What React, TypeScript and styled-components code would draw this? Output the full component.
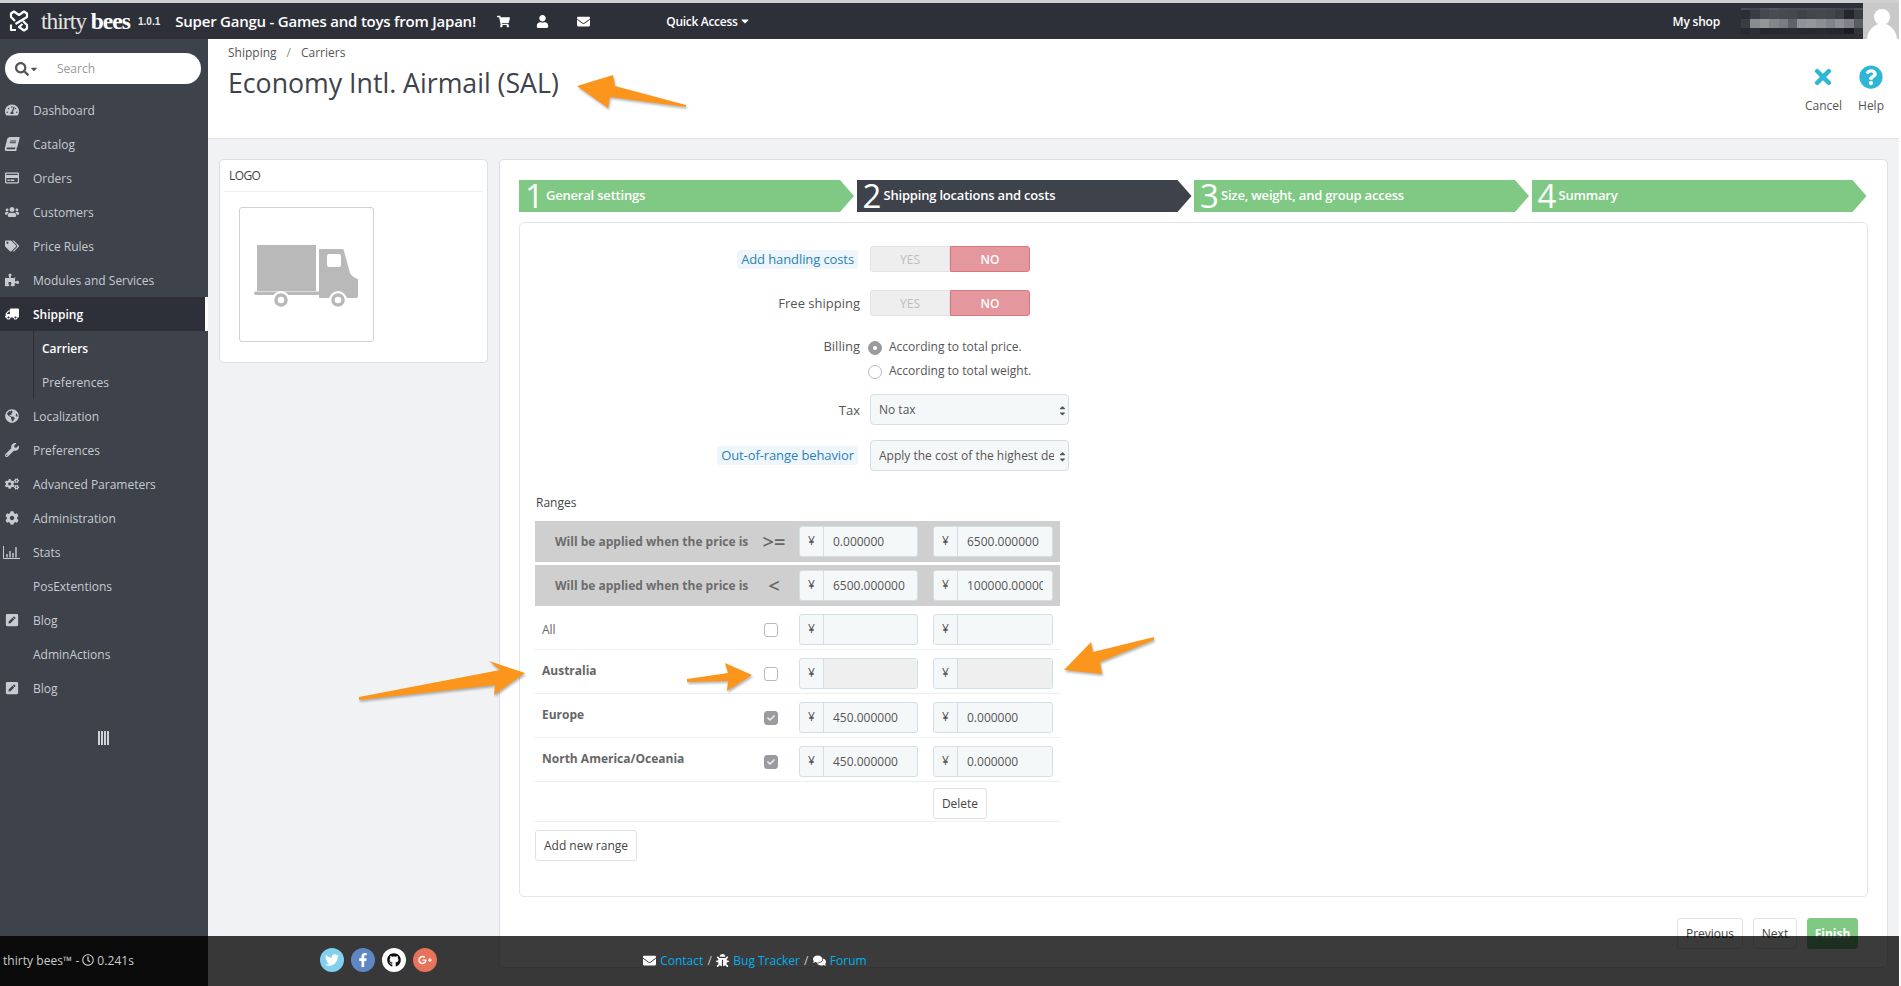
import { ReactNode } from 'react'
import styled, { createGlobalStyle } from 'styled-components'
import {
  FaBook,
  FaBug,
  FaCaretDown,
  FaCaretUp,
  FaCheck,
  FaCog,
  FaCogs,
  FaComments,
  FaEnvelope,
  FaFacebookF,
  FaGithub,
  FaGlobeAmericas,
  FaGooglePlusG,
  FaPenSquare,
  FaPuzzlePiece,
  FaQuestionCircle,
  FaRegClock,
  FaRegCreditCard,
  FaSearch,
  FaShoppingCart,
  FaTachometerAlt,
  FaTags,
  FaTimes,
  FaTruck,
  FaTwitter,
  FaUser,
  FaUsers,
  FaWrench,
} from 'react-icons/fa'

const GlobalStyle = createGlobalStyle`
  html, body {
    margin: 0;
    background: #fff;
    font-family: "Open Sans", "Liberation Sans", sans-serif;
    font-size: 12px;
    color: #555;
  }
  * { box-sizing: border-box; }
`

const Page = styled.div`
  position: relative;
  width: 1899px;
  height: 986px;
  overflow: hidden;
`

const TopBar = styled.header`
  height: 39px;
  border-top: 3px solid #cfcfd1;
  background: #2e3039;
  display: flex;
  align-items: center;
  color: #fff;
`

const LogoMark = styled.svg`
  width: 20px;
  height: 22px;
  margin-left: 9px;
`

const LogoText = styled.span`
  margin-left: 12px;
  width: 92px;
  font-family: "Liberation Serif", serif;
  font-size: 23.5px;
  letter-spacing: -1px;
  white-space: nowrap;
  color: #e4e4e4;
  b { color: #fff; font-weight: 700; }
`

const Version = styled.span`
  margin-left: 5px;
  font-family: "Liberation Sans", sans-serif;
  font-size: 10px;
  font-weight: 700;
  color: #e8e8e8;
`

const ShopName = styled.span`
  margin-left: 15px;
  font-size: 15px;
  font-weight: 600;
  letter-spacing: -0.22px;
  width: 302px;
  white-space: nowrap;
`

const TopIcon = styled.span<{ $gap: number }>`
  display: flex;
  margin-left: ${p => p.$gap}px;
  font-size: 13px;
`

const QuickAccess = styled.span`
  margin-left: 76px;
  display: flex;
  align-items: center;
  gap: 2px;
  font-weight: 600;
  letter-spacing: -0.3px;
`

const MyShop = styled.span`
  margin-left: auto;
  font-weight: 600;
  letter-spacing: -0.2px;
`

const Blurred = styled.svg`
  display: block;
  width: 122px;
  height: 26px;
  margin-left: 21px;
`

const Avatar = styled.svg`
  display: block;
  width: 36px;
  height: 36px;
`

const Body = styled.div`
  display: flex;
  height: 947px;
`

const Sidebar = styled.nav`
  width: 208px;
  flex: none;
  background: #3e424b;
  padding-top: 14px;
`

const SearchBox = styled.div`
  width: 196px;
  height: 31px;
  margin: 0 0 9px 5px;
  border-radius: 16px;
  background: #fff;
  display: flex;
  align-items: center;
  padding-left: 10px;
  color: #555;
  font-size: 12px;
  > svg:first-child { font-size: 14px; }
  span { color: #999; margin-left: 18px; }
`

const MenuRow = styled.div<{ $active?: boolean }>`
  height: 34px;
  display: flex;
  align-items: center;
  padding-left: 33px;
  position: relative;
  color: ${p => (p.$active ? '#fff' : '#c7cbd1')};
  font-weight: ${p => (p.$active ? 600 : 400)};
  background: ${p => (p.$active ? '#2e3039' : 'transparent')};
  border-right: ${p => (p.$active ? '3px solid #fff' : 'none')};
`

const MenuIcon = styled.span`
  position: absolute;
  left: 3px;
  width: 17px;
  display: flex;
  justify-content: center;
  color: #c7cbd1;
  font-size: 14px;
`

const ShippingIcon = styled(MenuIcon)`
  color: #fff;
  svg { transform: scaleX(-1); }
`

const SlantedBook = styled(FaBook)`
  transform: skewX(-14deg);
`

const SubMenu = styled.div`
  margin-left: 33px;
  border-left: 1px solid #2e3039;
`

const SubRow = styled.div<{ $active?: boolean }>`
  height: 34px;
  display: flex;
  align-items: center;
  padding-left: 8px;
  color: ${p => (p.$active ? '#fff' : '#c7cbd1')};
  font-weight: ${p => (p.$active ? 600 : 400)};
`

const Collapse = styled.div`
  display: flex;
  justify-content: center;
  gap: 1px;
  margin: 26px 0 0 -2px;
  i { display: block; width: 2px; height: 14px; background: #cfd2d6; }
`

const Content = styled.main`
  flex: 1;
  min-width: 0;
  background: #f1f2f4;
`

const PageHead = styled.div`
  height: 100px;
  background: #fff;
  border-bottom: 1px solid #dfe1e4;
  padding: 6px 15px 0 20px;
  display: flex;
  justify-content: space-between;
`

const Breadcrumb = styled.div`
  height: 16px;
  line-height: 16px;
  color: #555;
  display: flex;
  gap: 10px;
  em { font-style: normal; color: #7a9a72; }
`

const PageTitle = styled.h1`
  margin: 3px 0 0;
  font-size: 26.7px;
  font-weight: 400;
  line-height: 38px;
  color: #3e424b;
`

const Toolbar = styled.div`
  display: flex;
  gap: 16px;
  padding-top: 20px;
`

const ToolButton = styled.div`
  display: flex;
  flex-direction: column;
  align-items: center;
  gap: 9px;
  color: #555;
  line-height: 16px;
  svg { color: #2eb6d6; font-size: 24px; }
`

const Columns = styled.div`
  display: flex;
  align-items: flex-start;
  gap: 11px;
  padding: 20px 11px 0;
`

const LogoPanel = styled.section`
  width: 269px;
  height: 204px;
  flex: none;
  background: #fff;
  border: 1px solid #dcdfe2;
  border-radius: 5px;
  padding: 0 4px;
`

const LogoHead = styled.div`
  height: 32px;
  line-height: 31px;
  padding-left: 5px;
  border-bottom: 1px solid #eceef0;
  color: #444;
  letter-spacing: -0.6px;
  font-size: 12px;
`

const LogoFrame = styled.div`
  width: 135px;
  height: 135px;
  margin: 15px 0 0 15px;
  border: 1px solid #cfd1d3;
  border-radius: 3px;
  svg { display: block; width: 133px; height: 133px; }
`

const MainPanel = styled.section`
  flex: 1;
  height: 809px;
  background: #fff;
  border: 1px solid #dcdfe2;
  border-radius: 5px;
  padding: 20px 19px 0;
`

const Steps = styled.div`
  display: flex;
  gap: 2.5px;
  margin-bottom: 10px;
`

const Step = styled.div<{ $current?: boolean }>`
  width: 335px;
  height: 32px;
  flex: none;
  display: flex;
  align-items: center;
  color: #fff;
  background: ${p => (p.$current ? '#3e424b' : '#7fc984')};
  clip-path: polygon(0 0, 321px 0, 100% 50%, 321px 100%, 0 100%);
  padding-left: 6px;
`

const StepNumber = styled.span`
  font-size: 33px;
  line-height: 32px;
  font-weight: 400;
  width: 21px;
  flex: none;
`

const StepLabel = styled.span`
  font-size: 13px;
  line-height: 29px;
  height: 31px;
  font-weight: 600;
  letter-spacing: -0.2px;
`

const FormPanel = styled.div`
  height: 675px;
  border: 1px solid #e4e5e7;
  border-radius: 5px;
  padding-top: 23px;
`

const FormRow = styled.div<{ $after: number }>`
  display: flex;
  align-items: center;
  gap: 10px;
  margin-bottom: ${p => p.$after}px;
`

const LabelCell = styled.div`
  width: 340px;
  display: flex;
  justify-content: flex-end;
  font-size: 13px;
  color: #555;
`

const HintLabel = styled.span`
  background: #eef6fb;
  color: #2a82b8;
  border-radius: 3px;
  padding: 0 4px;
  margin-right: 2px;
  line-height: 19px;
  letter-spacing: -0.1px;
`

const TopLabel = styled.span`
  margin-bottom: 25px;
`

const Toggle = styled.div`
  display: flex;
  width: 160px;
  height: 26px;
`

const ToggleOff = styled.span`
  flex: 1;
  display: flex;
  align-items: center;
  justify-content: center;
  background: #eeeeee;
  border: 1px solid #e2e2e2;
  border-radius: 3px 0 0 3px;
  color: #bdbdbd;
`

const ToggleOn = styled.span`
  flex: 1;
  display: flex;
  align-items: center;
  justify-content: center;
  background: #e4989e;
  border: 1px solid #d9777f;
  border-radius: 0 3px 3px 0;
  color: #fff;
  font-weight: 600;
`

const RadioStack = styled.div`
  display: flex;
  flex-direction: column;
  gap: 6px;
`

const RadioLine = styled.div`
  height: 18px;
  display: flex;
  align-items: center;
  gap: 7px;
  margin-left: -2px;
  color: #555;
`

const RadioDot = styled.span<{ $on?: boolean }>`
  width: 14px;
  height: 14px;
  border-radius: 50%;
  margin-top: 2px;
  border: 1px solid ${p => (p.$on ? '#9a9a9f' : '#b9b9bd')};
  background: ${p => (p.$on ? '#9a9a9f' : '#fff')};
  display: flex;
  align-items: center;
  justify-content: center;
  &::after {
    content: '';
    width: 4px;
    height: 4px;
    border-radius: 50%;
    background: ${p => (p.$on ? '#fff' : 'transparent')};
  }
`

const SelectWrap = styled.div`
  position: relative;
  width: 199px;
`

const Select = styled.select`
  display: block;
  width: 100%;
  height: 31px;
  appearance: none;
  background: #f5f8f9;
  border: 1px solid #d3e0e3;
  border-radius: 4px;
  color: #555;
  font: 12px "Open Sans", sans-serif;
  padding: 0 14px 0 8px;
`

const SelectArrows = styled.span`
  position: absolute;
  right: 2px;
  top: 9px;
  display: flex;
  flex-direction: column;
  font-size: 9px;
  line-height: 0;
  color: #555;
  svg:last-child { margin-top: -3px; }
`

const RangesTitle = styled.div`
  margin: 24px 0 10px 16px;
  line-height: 16px;
  color: #444;
`

const RangeTable = styled.div`
  width: 525px;
  margin-left: 15px;
`

const RangeRow = styled.div<{ $head?: boolean }>`
  display: grid;
  grid-template-columns: 210px 47px 134px 120px;
  align-items: center;
  padding: ${p => (p.$head ? '5px 7px' : '8px 7px 5px')};
  height: ${p => (p.$head ? '41px' : '44px')};
  background: ${p => (p.$head ? '#cfcfcf' : 'transparent')};
  margin-bottom: ${p => (p.$head ? '3px' : '0')};
  border-bottom: ${p => (p.$head ? 'none' : '1px solid #eceef0')};
  &:nth-child(2) { margin-bottom: 0; }
`

const HeadLabel = styled.span`
  padding-left: 13px;
  font-weight: 700;
  color: #6c6c6c;
  white-space: nowrap;
`

const Operator = styled.span`
  width: 44px;
  text-align: center;
  font-size: 20px;
  line-height: 20px;
  font-weight: 600;
  color: #666;
`

const ZoneLabel = styled.span<{ $bold?: boolean }>`
  color: #666;
  font-weight: ${p => (p.$bold ? 700 : 400)};
  margin-bottom: ${p => (p.$bold ? '6px' : '0')};
`

const Check = styled.span<{ $on?: boolean }>`
  width: 14px;
  height: 14px;
  margin-left: 12px;
  border-radius: 3px;
  border: 1px solid ${p => (p.$on ? '#9a9a9f' : '#b9b9bd')};
  background: ${p => (p.$on ? '#9a9a9f' : '#fff')};
  display: flex;
  align-items: center;
  justify-content: center;
  font-size: 8px;
  color: #eee;
`

const InputGroup = styled.div<{ $w: number }>`
  width: ${p => p.$w}px;
  height: 31px;
  display: flex;
  border: 1px solid #d3e0e3;
  border-radius: 3px;
  background: #f5f8f9;
  overflow: hidden;
`

const Addon = styled.span`
  width: 24px;
  flex: none;
  display: flex;
  align-items: center;
  justify-content: center;
  border-right: 1px solid #d3e0e3;
  color: #555;
  font-size: 12px;
  padding-bottom: 3px;
`

const Amount = styled.input<{ $off?: boolean }>`
  flex: 1;
  min-width: 0;
  width: 100%;
  border: 0;
  outline: 0;
  padding: 0 9px;
  font: 12px "Open Sans", sans-serif;
  color: #555;
  background: ${p => (p.$off ? '#efefef' : 'transparent')};
`

const PlainButton = styled.button<{ $w: number }>`
  width: ${p => p.$w}px;
  height: 31px;
  padding: 0;
  background: #fff;
  border: 1px solid #e0e1e3;
  border-radius: 3px;
  color: #444;
  font: 12px "Open Sans", sans-serif;
`

const DeleteRow = styled.div`
  height: 40px;
  padding: 6px 0 0 398px;
  border-bottom: 1px solid #eceef0;
`

const AddRow = styled.div`
  margin: 8px 0 0 15px;
`

const WizardActions = styled.div`
  display: flex;
  justify-content: flex-end;
  gap: 10px;
  padding: 21px 10px 0 0;
`

const FinishButton = styled(PlainButton)`
  background: #7fc984;
  border-color: #7fc984;
  color: #fff;
  font-weight: 700;
`

const Footer = styled.footer`
  position: absolute;
  left: 0;
  bottom: 0;
  width: 100%;
  height: 50px;
  display: flex;
  z-index: 3;
  background: rgba(0, 0, 0, 0.77);
`

const FooterBrand = styled.div`
  width: 208px;
  flex: none;
  background: #0a0a0a;
  color: #ccc;
  display: flex;
  align-items: center;
  gap: 3px;
  padding: 0 0 2px 3px;
  white-space: nowrap;
  letter-spacing: 0.05px;
`

const Socials = styled.div`
  display: flex;
  align-items: center;
  gap: 7px;
  margin-left: 112px;
  padding-bottom: 2px;
`

const Social = styled.span<{ $bg: string; $fg?: string }>`
  width: 24px;
  height: 24px;
  border-radius: 50%;
  display: flex;
  align-items: center;
  justify-content: center;
  font-size: 14px;
  background: ${p => p.$bg};
  color: ${p => p.$fg ?? '#fff'};
`

const FooterLinks = styled.div`
  display: flex;
  align-items: center;
  gap: 4.2px;
  margin-left: 206px;
  padding-bottom: 2px;
  color: #ccc;
  a { color: #00aff0; }
  svg { color: #fff; font-size: 13px; }
`

const Arrows = styled.svg`
  position: absolute;
  left: 0;
  top: 0;
  width: 1901px;
  height: 986px;
  z-index: 2;
  pointer-events: none;
  polygon {
    fill: #fb951c;
    filter: drop-shadow(1px 2px 1px rgba(0, 0, 0, 0.28));
  }
`

function ThirtyBeesMark() {
  return (
    <LogoMark viewBox="0 0 20 22" fill="none" stroke="#fff" strokeWidth="2.2" strokeLinejoin="round">
      <path d="M6 11 L2 7 V3.5 L5 1.5 L10 5 L15 1.5 L18 3.5 V7 L6.5 14" />
      <path d="M14 11 L18 15 V18.5 L15 20.5 L10 17 L13.5 14 M2 14.5 V20 H7" />
    </LogoMark>
  )
}

// pixelated shop address in the top bar
const blurRows: [number, number, string[]][] = [
  [0, 2, ['#4a4d56', '#44474f', '#4c4f58', '#55585f', '#4b4e57', '#4a4d56', '#4c4f58', '#4b4e57', '#4a4d56', '#484b54', '#454851', '#404249', '#4f5158']],
  [2, 9, ['#2c2e36', '#3a3d45', '#454850', '#4a4c54', '#46494f', '#45484f', '#3f4249', '#43464d', '#46484f', '#44464e', '#3d3f47', '#24262c', '#3a3c44']],
  [11, 9, ['#3a3c44', '#8b8c90', '#95969a', '#85868b', '#7b7c81', '#5f626a', '#92939a', '#96979b', '#8e8f94', '#82838a', '#8f9198', '#808186', '#5a5c62']],
  [20, 6, ['#282a31', '#2d2f36', '#25272d', '#272930', '#282a30', '#2a2c33', '#282a30', '#272930', '#292b31', '#26282e', '#25272c', '#1c1d22', '#33353c']],
]

function BlurredShop() {
  return (
    <Blurred viewBox="0 0 122 26" shapeRendering="crispEdges">
      {blurRows.map(([y, h, cells]) =>
        cells.map((fill, i) => <rect key={`${y}-${i}`} x={i * 9.4} y={y} width={9.4} height={h} fill={fill} />),
      )}
    </Blurred>
  )
}

function AvatarPicture() {
  return (
    <Avatar viewBox="0 0 36 36">
      <rect width="36" height="36" fill="#c9c9c9" />
      <circle cx="19" cy="14" r="8" fill="#fff" />
      <path d="M4 36 C5 26 11 23 15 21 H23 C27 23 33 26 34 36 Z" fill="#fff" />
    </Avatar>
  )
}

function TruckPicture() {
  return (
    <svg viewBox="1 1 133 133">
      <rect x="18" y="38" width="59" height="46" fill="#b9b9b9" />
      <path d="M80 42 H103 Q105 42 105 44 L111 66 Q113 70 119 72 V89 Q119 91 117 91 H80 V88 H17 Q15 88 15 86 Q15 84.5 17 84.5 H80 Z" fill="#b9b9b9" />
      <rect x="88" y="47" width="14" height="13" rx="2" fill="#fff" />
      <circle cx="42" cy="93" r="9" fill="#fff" />
      <circle cx="42" cy="93" r="5" fill="#fff" stroke="#b9b9b9" strokeWidth="3.5" />
      <circle cx="99" cy="93" r="9" fill="#fff" />
      <circle cx="99" cy="93" r="5" fill="#fff" stroke="#b9b9b9" strokeWidth="3.5" />
    </svg>
  )
}

function StatsIcon() {
  return (
    <svg width="17" height="13" viewBox="0 0 17 13" fill="none" stroke="#c7cbd1">
      <path d="M.5 0 V12.5 H17" />
      <path d="M4 11.5 V8 M7 11.5 V5 M10 11.5 V7 M13 11.5 V1" strokeWidth="1.4" />
    </svg>
  )
}

type MenuEntry = { label: string; icon?: ReactNode }

const upperMenu: MenuEntry[] = [
  { label: 'Dashboard', icon: <FaTachometerAlt /> },
  { label: 'Catalog', icon: <SlantedBook /> },
  { label: 'Orders', icon: <FaRegCreditCard /> },
  { label: 'Customers', icon: <FaUsers /> },
  { label: 'Price Rules', icon: <FaTags /> },
  { label: 'Modules and Services', icon: <FaPuzzlePiece /> },
]

const lowerMenu: MenuEntry[] = [
  { label: 'Localization', icon: <FaGlobeAmericas /> },
  { label: 'Preferences', icon: <FaWrench /> },
  { label: 'Advanced Parameters', icon: <FaCogs /> },
  { label: 'Administration', icon: <FaCog /> },
  { label: 'Stats', icon: <StatsIcon /> },
  { label: 'PosExtentions' },
  { label: 'Blog', icon: <FaPenSquare /> },
  { label: 'AdminActions' },
  { label: 'Blog', icon: <FaPenSquare /> },
]

const wizardSteps = [
  'General settings',
  'Shipping locations and costs',
  'Size, weight, and group access',
  'Summary',
]

const zones = [
  { name: 'All', checked: false, off: false, bold: false, from: '', to: '' },
  { name: 'Australia', checked: false, off: true, bold: true, from: '', to: '' },
  { name: 'Europe', checked: true, off: false, bold: true, from: '450.000000', to: '0.000000' },
  { name: 'North America/Oceania', checked: true, off: false, bold: true, from: '450.000000', to: '0.000000' },
]

function MoneyInput({ w, value, off }: { w: number; value: string; off?: boolean }) {
  return (
    <InputGroup $w={w}>
      <Addon>¥</Addon>
      <Amount $off={off} value={value} readOnly />
    </InputGroup>
  )
}

function NoYesToggle() {
  return (
    <Toggle>
      <ToggleOff>YES</ToggleOff>
      <ToggleOn>NO</ToggleOn>
    </Toggle>
  )
}

function FormSelect({ value }: { value: string }) {
  return (
    <SelectWrap>
      <Select value={value} onChange={() => {}}>
        <option>{value}</option>
      </Select>
      <SelectArrows>
        <FaCaretUp />
        <FaCaretDown />
      </SelectArrows>
    </SelectWrap>
  )
}

export default function App() {
  return (
    <Page>
      <GlobalStyle />
      <TopBar>
        <ThirtyBeesMark />
        <LogoText>
          thirty <b>bees</b>
        </LogoText>
        <Version>1.0.1</Version>
        <ShopName>Super Gangu - Games and toys from Japan!</ShopName>
        <TopIcon $gap={20}><FaShoppingCart /></TopIcon>
        <TopIcon $gap={26}><FaUser /></TopIcon>
        <TopIcon $gap={28}><FaEnvelope /></TopIcon>
        <QuickAccess>Quick Access <FaCaretDown /></QuickAccess>
        <MyShop>My shop</MyShop>
        <BlurredShop />
        <AvatarPicture />
      </TopBar>
      <Body>
        <Sidebar>
          <SearchBox>
            <FaSearch />
            <FaCaretDown size={10} />
            <span>Search</span>
          </SearchBox>
          {upperMenu.map(item => (
            <MenuRow key={item.label}>
              <MenuIcon>{item.icon}</MenuIcon>
              {item.label}
            </MenuRow>
          ))}
          <MenuRow $active>
            <ShippingIcon><FaTruck /></ShippingIcon>
            Shipping
          </MenuRow>
          <SubMenu>
            <SubRow $active>Carriers</SubRow>
            <SubRow>Preferences</SubRow>
          </SubMenu>
          {lowerMenu.map((item, i) => (
            <MenuRow key={i}>
              <MenuIcon>{item.icon}</MenuIcon>
              {item.label}
            </MenuRow>
          ))}
          <Collapse><i /><i /><i /><i /></Collapse>
        </Sidebar>
        <Content>
          <PageHead>
            <div>
              <Breadcrumb>
                <span>Shipping</span>
                <em>/</em>
                <span>Carriers</span>
              </Breadcrumb>
              <PageTitle>Economy Intl. Airmail (SAL)</PageTitle>
            </div>
            <Toolbar>
              <ToolButton><FaTimes />Cancel</ToolButton>
              <ToolButton><FaQuestionCircle />Help</ToolButton>
            </Toolbar>
          </PageHead>
          <Columns>
            <LogoPanel>
              <LogoHead>LOGO</LogoHead>
              <LogoFrame><TruckPicture /></LogoFrame>
            </LogoPanel>
            <MainPanel>
              <Steps>
                {wizardSteps.map((label, i) => (
                  <Step key={label} $current={i === 1}>
                    <StepNumber>{i + 1}</StepNumber>
                    <StepLabel>{label}</StepLabel>
                  </Step>
                ))}
              </Steps>
              <FormPanel>
                <FormRow $after={18}>
                  <LabelCell><HintLabel>Add handling costs</HintLabel></LabelCell>
                  <NoYesToggle />
                </FormRow>
                <FormRow $after={21}>
                  <LabelCell>Free shipping</LabelCell>
                  <NoYesToggle />
                </FormRow>
                <FormRow $after={14}>
                  <LabelCell>
                    <TopLabel>Billing</TopLabel>
                  </LabelCell>
                  <RadioStack>
                    <RadioLine><RadioDot $on />According to total price.</RadioLine>
                    <RadioLine><RadioDot />According to total weight.</RadioLine>
                  </RadioStack>
                </FormRow>
                <FormRow $after={15}>
                  <LabelCell>Tax</LabelCell>
                  <FormSelect value="No tax" />
                </FormRow>
                <FormRow $after={0}>
                  <LabelCell><HintLabel>Out-of-range behavior</HintLabel></LabelCell>
                  <FormSelect value="Apply the cost of the highest defined range" />
                </FormRow>
                <RangesTitle>Ranges</RangesTitle>
                <RangeTable>
                  <RangeRow $head>
                    <HeadLabel>Will be applied when the price is</HeadLabel>
                    <Operator>&gt;=</Operator>
                    <MoneyInput w={119} value="0.000000" />
                    <MoneyInput w={120} value="6500.000000" />
                  </RangeRow>
                  <RangeRow $head>
                    <HeadLabel>Will be applied when the price is</HeadLabel>
                    <Operator>&lt;</Operator>
                    <MoneyInput w={119} value="6500.000000" />
                    <MoneyInput w={120} value="100000.000000" />
                  </RangeRow>
                  {zones.map(zone => (
                    <RangeRow key={zone.name}>
                      <ZoneLabel $bold={zone.bold}>{zone.name}</ZoneLabel>
                      <Check $on={zone.checked}>{zone.checked && <FaCheck />}</Check>
                      <MoneyInput w={119} value={zone.from} off={zone.off} />
                      <MoneyInput w={120} value={zone.to} off={zone.off} />
                    </RangeRow>
                  ))}
                  <DeleteRow><PlainButton $w={54}>Delete</PlainButton></DeleteRow>
                </RangeTable>
                <AddRow><PlainButton $w={102}>Add new range</PlainButton></AddRow>
              </FormPanel>
              <WizardActions>
                <PlainButton $w={66}>Previous</PlainButton>
                <PlainButton $w={44}>Next</PlainButton>
                <FinishButton $w={51}>Finish</FinishButton>
              </WizardActions>
            </MainPanel>
          </Columns>
        </Content>
      </Body>
      <Arrows viewBox="0 0 1901 986">
        <polygon points="577,86 613,75 615,86 686,105 686,107 610,97 608,108" />
        <polygon points="525,673 489,661 500,670 359,697 359,700 495,685 494,695" />
        <polygon points="752,675 725,663 728,673 687,679 687,682 728,681 727,691" />
        <polygon points="1064,670 1091,642 1093,652 1154,637 1154,640 1100,662 1102,674" />
      </Arrows>
      <Footer>
        <FooterBrand>
          thirty bees™ - <FaRegClock size={12} /> 0.241s
        </FooterBrand>
        <Socials>
          <Social $bg="#82d0ef"><FaTwitter /></Social>
          <Social $bg="#5f87c3"><FaFacebookF /></Social>
          <Social $bg="#fff" $fg="#111"><FaGithub /></Social>
          <Social $bg="#e8735b"><FaGooglePlusG /></Social>
        </Socials>
        <FooterLinks>
          <FaEnvelope /> <a>Contact</a> / <FaBug /> <a>Bug Tracker</a> / <FaComments /> <a>Forum</a>
        </FooterLinks>
      </Footer>
    </Page>
  )
}
